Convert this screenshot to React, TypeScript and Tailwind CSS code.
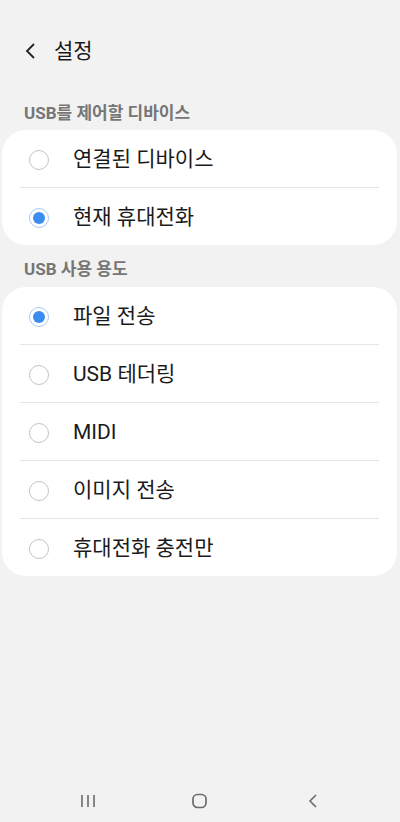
import React from "react";

const font = { fontFamily: '"Roboto", "Noto Sans CJK KR", sans-serif' };

function Radio({ checked }: { checked: boolean }) {
  return checked ? (
    <span className="flex h-[20px] w-[20px] items-center justify-center rounded-full border-[1.5px] border-[#a9c9f3]">
      <span className="h-[12px] w-[12px] rounded-full bg-[#3b8cf0]" />
    </span>
  ) : (
    <span className="block h-[20px] w-[20px] rounded-full border-[1.5px] border-[#c4c4c4]" />
  );
}

function Card({ items }: { items: { label: string; checked: boolean }[] }) {
  return (
    <div className="ml-[2px] mr-[3px] rounded-[24px] bg-white">
      {items.map((item, i) => (
        <div key={item.label}>
          {i > 0 && <div className="mx-[18px] h-px bg-[#e6e6e6]" />}
          <div className="flex h-[57px] items-center pl-[27px] pt-[2px]">
            <Radio checked={item.checked} />
            <span className="ml-[24px] text-[21px] text-[#1a1a1a]">{item.label}</span>
          </div>
        </div>
      ))}
    </div>
  );
}

export default function App() {
  return (
    <div className="flex h-[822px] w-[400px] flex-col bg-[#f2f2f2]" style={font}>
      {/* Header */}
      <div className="flex h-[100px] items-center pl-[24px] pt-[4px]">
        <svg width="14" height="18" viewBox="0 0 14 18" className="mb-[2px]">
          <path d="M10 2 L3 9 L10 16" fill="none" stroke="#222" strokeWidth="1.8" />
        </svg>
        <span className="ml-[16px] text-[21px] text-[#1a1a1a]">설정</span>
      </div>

      <div className="h-[30px] pl-[24px] pt-[1px] text-[17px] font-bold text-[#767676]">USB를 제어할 디바이스</div>
      <Card
        items={[
          { label: "연결된 디바이스", checked: false },
          { label: "현재 휴대전화", checked: true },
        ]}
      />

      <div className="h-[42px] pl-[24px] pt-[12px] text-[17px] font-bold text-[#767676]">USB 사용 용도</div>
      <Card
        items={[
          { label: "파일 전송", checked: true },
          { label: "USB 테더링", checked: false },
          { label: "MIDI", checked: false },
          { label: "이미지 전송", checked: false },
          { label: "휴대전화 충전만", checked: false },
        ]}
      />

      <div className="flex-1" />

      {/* Navigation bar */}
      <div className="flex h-[48px] items-center pl-[68px] pt-[6px]">
        <div className="flex w-[40px] justify-center">
          <svg width="16" height="14" viewBox="0 0 16 14">
            <path d="M2 1 V13 M8 1 V13 M14 1 V13" stroke="#6b6b6b" strokeWidth="1.6" />
          </svg>
        </div>
        <div className="ml-[72px] flex w-[40px] justify-center">
          <svg width="18" height="16" viewBox="0 0 18 16">
            <rect x="2" y="1.5" width="13" height="13" rx="4.5" fill="none" stroke="#6b6b6b" strokeWidth="1.7" />
          </svg>
        </div>
        <div className="ml-[73px] flex w-[40px] justify-center">
          <svg width="12" height="16" viewBox="0 0 12 16">
            <path d="M9 2 L3 8 L9 14" fill="none" stroke="#6b6b6b" strokeWidth="1.6" />
          </svg>
        </div>
      </div>
    </div>
  );
}
